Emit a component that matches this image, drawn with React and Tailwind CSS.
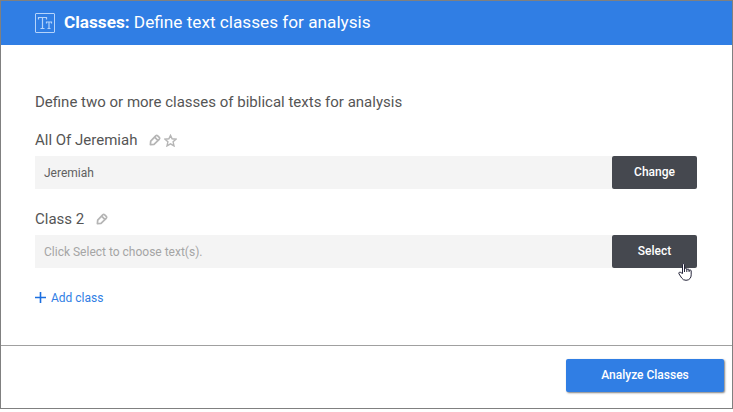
import React, { useState } from "react";

const TextIcon = () => (
  <svg width="20" height="20" viewBox="0 0 20 20" fill="none" stroke="#b5d3fa" strokeWidth="1">
    <rect x="0.5" y="0.5" width="19" height="19" rx="0.5" />
    <path d="M3.5 6.5v-2h8v2M7.5 4.5v11M5.5 15.5h4M11.5 10.5v-1.5h5v1.5M14 9v6.5M12.5 15.5h3" strokeWidth="1.2" />
  </svg>
);

const PencilIcon = () => (
  <svg width="12" height="12" viewBox="0 0 12 12" fill="none" stroke="#b5b5b5" strokeWidth="1.7" strokeLinejoin="round">
    <path d="M1.4 10.6l.3-3.5 5-5.3q1-.9 2 0l1.5 1.5q.9 1 0 2l-5.2 5zM5.7 3.2l3.1 3.1" />
  </svg>
);

const StarIcon = () => (
  <svg width="13" height="13" viewBox="0 0 13 13" fill="none" stroke="#b5b5b5" strokeWidth="1.4" strokeLinejoin="miter">
    <path d="M6.5 1.4l1.6 3.4 3.9.4-2.9 2.6.9 4.1-3.5-2.1-3.5 2.1.9-4.1-2.9-2.6 3.9-.4z" />
  </svg>
);

const HandCursor = () => (
  <svg className="absolute left-[66px] top-7 pointer-events-none" width="14" height="18" viewBox="0 0 14 18" fill="#fff" stroke="#25253a" strokeWidth="1" strokeLinejoin="round">
    <path d="M4.5 10.5V1.8Q4.5.6 5.5.6t1 1.2v4.4q0-.9 1.1-.9t1.2 1v.4q.2-.7 1.2-.7t1.1 1.1v.4q.3-.6 1.1-.6t1 1.1v3.8q0 2.3-1.2 3.7-1.3 1.8-4 1.8-3 0-4.3-2.3L1 10.9Q.4 9.8 1.3 9.3t1.7.4zM6.5 5.8V9M8.8 6.3V9M11.1 7v2" />
  </svg>
);

const ClassRow = ({ item }) => (
  <div className="mb-4">
    <div className="h-7 flex items-center text-[15px] text-[#555] mb-0.5">
      <span>{item.name}</span>
      <button type="button" className="ml-3"><PencilIcon /></button>
      {item.starred && <button type="button" className="ml-[3px]"><StarIcon /></button>}
    </div>
    <div className="flex h-[33px]">
      <div className={`w-[577px] bg-[#f4f4f4] pl-[9px] flex items-center text-xs ${item.text ? "text-[#606060]" : "text-[#a5a5a5]"}`}>
        {item.text || "Click Select to choose text(s)."}
      </div>
      <button type="button" className="relative w-[85px] pb-0.5 bg-[#45484f] rounded-[2px] text-white font-medium text-xs">
        {item.text ? "Change" : "Select"}
        {!item.text && <HandCursor />}
      </button>
    </div>
  </div>
);

const App = () => {
  const [classes] = useState([
    { name: "All Of Jeremiah", text: "Jeremiah", starred: true },
    { name: "Class 2", text: "", starred: false },
  ]);

  return (
    <div className="w-[733px] h-[412px] bg-white font-['Roboto',sans-serif]">
      <div className="h-[409px] border border-[#808080] flex flex-col">
        <div className="h-11 bg-[#307ee4] flex items-center pl-[34px] text-white text-[17.2px]">
          <TextIcon />
          <h1 className="ml-[9px]"><span className="font-bold">Classes:</span> Define text classes for analysis</h1>
        </div>

        <div className="flex-1 px-[34px] pt-[47px]">
          <p className="text-[15px] leading-5 text-[#555] mb-3.5">Define two or more classes of biblical texts for analysis</p>
          {classes.map((item) => <ClassRow key={item.name} item={item} />)}
          <button type="button" className="mt-[22px] flex items-center gap-[5px] text-xs text-[#307ee4]">
            <svg className="-mt-0.5" width="11" height="11" viewBox="0 0 11 11" stroke="#1c6fe0" strokeWidth="1.6">
              <path d="M5.5 0v11M0 5.5h11" />
            </svg>
            Add class
          </button>
        </div>

        <div className="h-[63px] border-t border-[#a0a0a0] flex justify-end pt-[13px] pr-2">
          <button type="button" className="w-[158px] h-[33px] pb-0.5 bg-[#307ee4] rounded-[2px] text-white font-medium text-xs shadow-[1px_1px_2px_rgba(0,0,0,0.5)]">
            Analyze Classes
          </button>
        </div>
      </div>
    </div>
  );
};

export default App;
